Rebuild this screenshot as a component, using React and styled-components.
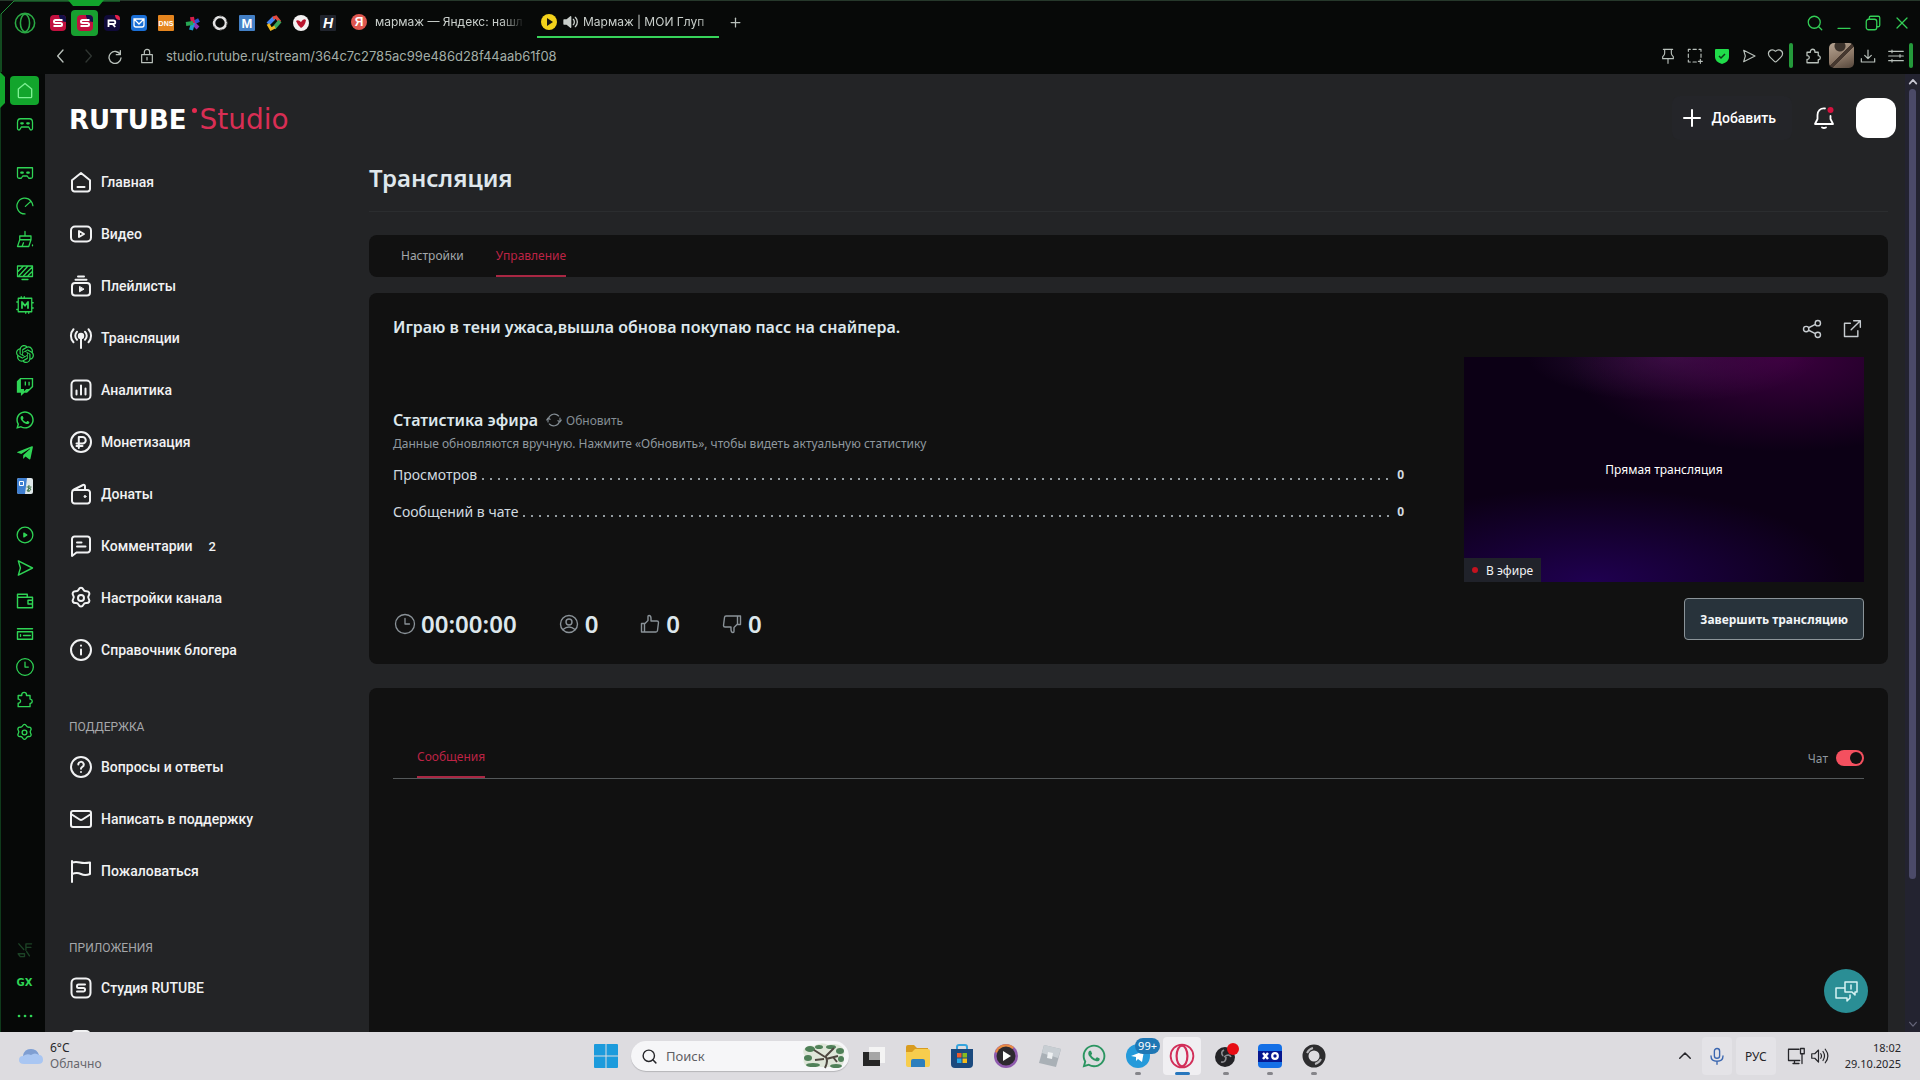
import React from 'react';
import styled, { createGlobalStyle } from 'styled-components';
import {
  Clock3,
  Heart,
  Mail,
  Plus,
  Search,
  X,
} from 'lucide-react';
import { SiOpenai } from 'react-icons/si';
import { FaTelegramPlane, FaTwitch, FaWhatsapp } from 'react-icons/fa';

const GlobalStyle = createGlobalStyle`
  * {
    box-sizing: border-box;
  }

  body {
    margin: 0;
    background: #070908;
    font-family: Roboto, "Liberation Sans", sans-serif;
    overflow: hidden;
  }

  button,
  input {
    font: inherit;
    color: inherit;
    border: 0;
    padding: 0;
    margin: 0;
    background: none;
  }

  a {
    color: inherit;
    text-decoration: none;
  }

  svg {
    display: block;
    flex: none;
  }
`;

/* ---------- window shell ---------- */

const Window = styled.div`
  position: relative;
  display: grid;
  grid-template-rows: 74px minmax(0, 1fr) 48px;
  height: 100vh;
`;

const FrameGlow = styled.svg`
  position: absolute;
  top: 0;
  left: 0;
  pointer-events: none;
`;

const Chrome = styled.header`
  display: grid;
  grid-template-rows: 43px 23px;
  background: #070908;
  border-top: 1px solid #26382b;
`;

const ChromeRow = styled.div`
  display: flex;
  align-items: center;
  justify-content: space-between;
`;

const TabStrip = styled.div`
  display: flex;
  align-items: center;
  padding-left: 9px;
`;

const PinnedTabs = styled.div`
  display: flex;
  margin-left: 4px;
`;

const ChromeButton = styled.button`
  display: flex;
  align-items: center;
  justify-content: center;
  width: ${props => props.$width || 27}px;
  height: 26px;
  border-radius: 4px;
  color: ${props => props.$color || '#b9c1bb'};
  background: ${props => props.$fill || 'none'};
`;

const TextTab = styled.button`
  display: flex;
  align-items: center;
  gap: ${props => (props.$active ? 5 : 8)}px;
  width: ${props => (props.$active ? 182 : 180)}px;
  height: 30px;
  margin-left: ${props => (props.$active ? 12 : 4)}px;
  padding-left: ${props => (props.$active ? 4 : 6)}px;
  border-bottom: 2px solid ${props => (props.$active ? '#37d45a' : 'transparent')};
  font-family: Inter, sans-serif;
  font-size: 12px;
  color: #c9cfcb;
`;

const TabTitle = styled.span`
  flex: 1;
  white-space: nowrap;
  text-align: left;
  mask-image: linear-gradient(90deg, #000 84%, transparent 100%);
`;

const AddressRow = styled.div`
  display: flex;
  flex: 1;
  align-items: center;
  padding-left: 47px;
`;

const AddressInput = styled.input`
  flex: 1;
  font-family: Inter, sans-serif;
  font-size: 13px;
  color: #a3aea7;
  outline: none;
`;

const ChromeActions = styled.div`
  display: flex;
  align-items: center;
  padding-right: ${props => props.$end || 0}px;
`;

const GreenBar = styled.span`
  width: 4px;
  height: 25px;
  margin-right: 4px;
  border-radius: 2px;
  background: #249a3b;
`;

const ProfileThumb = styled.span`
  width: 25px;
  height: 25px;
  border-radius: 5px;
  background:
    radial-gradient(circle at 44% 12%, #3b322b 0 5px, transparent 6px),
    linear-gradient(135deg, transparent 46%, #46382f 48% 56%, transparent 58%),
    linear-gradient(160deg, #b7a593, #8b7766 55%, #54463b);
`;

const Middle = styled.div`
  display: grid;
  grid-template-columns: 45px minmax(0, 1fr) 15px;
  min-height: 0;
`;

/* ---------- GX side panel ---------- */

const SidePanel = styled.nav`
  display: flex;
  flex-direction: column;
  padding: 0 0 0 8px;
  background: #060807;
  border-left: 1px solid #0f3a1b;
`;

const SideGroup = styled.div`
  display: flex;
  flex-direction: column;
  margin-bottom: 16px;

  &:last-child {
    margin: auto 0 0;
  }
`;

const SideButton = styled.button`
  display: flex;
  align-items: center;
  justify-content: center;
  width: 31px;
  height: 33px;
  color: ${props => (props.$dim ? '#1c4326' : '#2fd455')};
`;

const SideHome = styled.span`
  display: flex;
  align-items: center;
  justify-content: center;
  width: 29px;
  height: 29px;
  border-radius: 4px;
  background: #12a52c;
  color: #7df093;
`;

const GxLabel = styled.span`
  font-family: "DejaVu Sans", sans-serif;
  font-size: 10px;
  font-weight: 700;
`;

/* ---------- studio page ---------- */

const Page = styled.div`
  position: relative;
  display: grid;
  grid-template-columns: 324px minmax(0, 1fr);
  min-height: 0;
  overflow: hidden;
  background: #232426;
`;

const Menu = styled.aside`
  display: flex;
  flex-direction: column;
  padding: 30px 24px 0;
`;

const Logo = styled.a`
  display: flex;
  align-items: center;
  height: 32px;
  margin-bottom: 26px;
  font-family: "DejaVu Sans", sans-serif;
`;

const LogoName = styled.span`
  font-size: 26px;
  font-weight: 700;
  color: #fff;
`;

const LogoDot = styled.span`
  align-self: flex-start;
  width: 5px;
  height: 5px;
  margin: 4px 3px 0 5px;
  border-radius: 50%;
  background: #e62a4f;
`;

const LogoSuffix = styled.span`
  font-size: 28px;
  line-height: 30px;
  color: #d92e54;
`;

const MenuList = styled.ul`
  display: flex;
  flex-direction: column;
  gap: 12px;
  margin: 0 0 ${props => (props.$gap ? 45 : 0)}px;
  padding: 0;
  list-style: none;
`;

const MenuLink = styled.a`
  display: flex;
  align-items: center;
  gap: 8px;
  height: 40px;
  font-size: 14px;
  font-weight: 500;
  color: #f1f2f3;
`;

const Counter = styled.span`
  margin-left: 8px;
  font-size: 13px;
`;

const MenuHeading = styled.h2`
  margin: 0 0 8px;
  font-size: 12px;
  font-weight: 400;
  line-height: 24px;
  color: #a5a7aa;
`;

const Main = styled.main`
  display: flex;
  flex-direction: column;
  padding: 24px 17px 0 0;
`;

const TopActions = styled.div`
  display: flex;
  align-items: center;
  justify-content: flex-end;
  height: 40px;
  margin-right: -8px;
`;

const AddButton = styled.button`
  display: flex;
  align-items: center;
  gap: 8px;
  height: 44px;
  padding: 0 16px 0 8px;
  border-radius: 8px;
  background: #242529;
  font-size: 14px;
  font-weight: 500;
  color: #fff;
`;

const BellButton = styled.button`
  display: flex;
  align-items: center;
  justify-content: center;
  width: 64px;
  height: 40px;
  color: #fff;
`;

const Avatar = styled.button`
  width: 40px;
  height: 40px;
  border-radius: 12px;
  background: #fff;
`;

const PageTitle = styled.h1`
  margin: 23px 0 16px;
  padding-bottom: 16px;
  border-bottom: 1px solid #2b2d2f;
  font-family: "Noto Sans", sans-serif;
  font-size: 24px;
  font-weight: 600;
  line-height: 34px;
  color: #dfe7ec;
`;

const Panel = styled.section`
  display: flex;
  flex-direction: column;
  border-radius: 8px;
  background: #111;
  font-family: "Noto Sans", sans-serif;
`;

const TabsPanel = styled(Panel)`
  flex-direction: row;
  gap: 32px;
  height: 42px;
  margin: 7px 0 16px;
  padding: 0 32px;
`;

const SectionTab = styled.button`
  height: 42px;
  border-bottom: 2px solid ${props => (props.$active ? '#a92743' : 'transparent')};
  font-size: 12px;
  color: ${props => (props.$active ? '#bd2345' : '#a3a8ab')};
`;

const StreamPanel = styled(Panel)`
  display: grid;
  grid-template-columns: minmax(0, 1fr) 400px;
  column-gap: 60px;
  height: 371px;
  margin-bottom: 24px;
  padding: 20px 24px 24px;
`;

const StreamTitle = styled.h2`
  margin: 0;
  font-size: 16px;
  font-weight: 600;
  line-height: 28px;
  color: #dde7ec;
`;

const StreamTools = styled.div`
  display: flex;
  align-items: center;
  justify-content: flex-end;
  gap: 16px;
  height: 32px;
`;

const ToolButton = styled.button`
  display: flex;
  align-items: center;
  justify-content: center;
  width: 24px;
  height: 24px;
  color: #c7ccd0;
`;

const StreamLeft = styled.div`
  display: flex;
  flex-direction: column;
`;

const StreamRight = styled.div`
  display: flex;
  flex-direction: column;
  align-items: flex-end;
`;

const StatsHead = styled.div`
  display: flex;
  align-items: center;
  gap: 8px;
  height: 24px;
  margin-top: 67px;
`;

const StatsTitle = styled.h3`
  margin: 0;
  font-size: 16px;
  font-weight: 600;
  color: #dde7ec;
`;

const RefreshButton = styled.button`
  display: flex;
  align-items: center;
  gap: 4px;
  font-size: 12px;
  color: #848d94;
`;

const StatsNote = styled.p`
  margin: 2px 0 8px;
  font-size: 12px;
  line-height: 20px;
  color: #8f989f;
`;

const StatsList = styled.dl`
  display: flex;
  flex-direction: column;
  gap: 13px;
  margin: 0;
`;

const StatsRow = styled.div`
  display: flex;
  align-items: center;
  height: 24px;

  dt {
    font-size: 14px;
    color: #d2dbe0;
  }

  dd {
    margin: 0;
    font-size: 12px;
    font-weight: 700;
    color: #d2dbe0;
  }
`;

const Leader = styled.span`
  flex: 1;
  height: 2px;
  margin: 10px 4px 0 2px;
  background: radial-gradient(circle, #949ca1 1px, transparent 1px) 0 0 / 8px 2px repeat-x;
`;

const Metrics = styled.div`
  display: flex;
  align-items: center;
  gap: 40px;
  height: 32px;
  margin: auto 0 0;
`;

const Metric = styled.div`
  display: flex;
  align-items: center;
  gap: 4px;
  font-size: 24px;
  font-weight: 600;
  line-height: 32px;
  color: #dde7ec;

  svg {
    color: #8a9298;
  }
`;

const Preview = styled.div`
  display: grid;
  width: 100%;
  height: 225px;
  margin: 12px 0 16px;
  background:
    radial-gradient(ellipse 54% 42% at 80% 0%, rgba(84, 0, 84, 0.65), transparent),
    radial-gradient(ellipse 36% 20% at 52% 0%, rgba(70, 28, 84, 0.6), transparent),
    radial-gradient(ellipse 64% 42% at 32% 100%, rgba(38, 0, 100, 0.75), transparent),
    #0c0015;
`;

const PreviewText = styled.span`
  grid-area: 1 / 1;
  place-self: center;
  font-size: 12px;
  color: #fff;
`;

const LiveBadge = styled.span`
  grid-area: 1 / 1;
  place-self: end start;
  display: flex;
  align-items: center;
  gap: 8px;
  height: 24px;
  padding: 0 8px;
  background: #20222a;
  font-size: 12px;
  color: #f2f2f4;

  &::before {
    content: '';
    width: 6px;
    height: 6px;
    border-radius: 50%;
    background: #c4121f;
  }
`;

const FinishButton = styled.button`
  height: 42px;
  padding: 0 15px;
  border: 1px solid #8b9499;
  border-radius: 4px;
  background: #28333b;
  font-size: 12px;
  font-weight: 700;
  color: #f1f5f7;
`;

const ChatPanel = styled(Panel)`
  flex: 1;
  padding: 49px 24px 0;
  border-radius: 8px 8px 0 0;
`;

const ChatHead = styled.div`
  display: flex;
  align-items: flex-end;
  justify-content: space-between;
  padding-left: 24px;
  border-bottom: 1px solid #54585a;
`;

const ChatTab = styled(SectionTab)`
  height: 41px;
`;

const ToggleLabel = styled.label`
  display: flex;
  align-items: center;
  gap: 8px;
  height: 40px;
  font-size: 12px;
  color: #8f989f;
`;

const Toggle = styled.input`
  appearance: none;
  display: flex;
  justify-content: flex-end;
  width: 28px;
  height: 16px;
  padding: 2px;
  border-radius: 8px;
  background: #f4505f;

  &::before {
    content: '';
    width: 12px;
    height: 12px;
    border-radius: 50%;
    background: #111;
  }
`;

const HelpButton = styled.button`
  position: absolute;
  right: 37px;
  bottom: 19px;
  display: flex;
  align-items: center;
  justify-content: center;
  width: 44px;
  height: 44px;
  border-radius: 50%;
  background: #2a8e95;
  color: #d6f3f4;
`;

const ScrollTrack = styled.div`
  display: flex;
  flex-direction: column;
  align-items: center;
  padding: 3px 0;
  background: #232330;
  color: #c6c6d2;
`;

const ScrollThumb = styled.div`
  width: 7px;
  height: 83%;
  margin: 2px 0 auto;
  border-radius: 4px;
  background: #4b4a68;
`;

/* ---------- taskbar ---------- */

const Taskbar = styled.footer`
  display: grid;
  grid-template-columns: 1fr auto 1fr;
  align-items: center;
  background: #dddce0;
  font-family: "Noto Sans", sans-serif;
  font-size: 12px;
  color: #26262a;
`;

const Weather = styled.button`
  display: flex;
  align-items: center;
  gap: 6px;
  justify-self: start;
  padding-left: 18px;
  line-height: 16px;
  text-align: left;
`;

const Muted = styled.span`
  display: block;
  color: #66666c;
`;

const Apps = styled.div`
  display: flex;
  align-items: center;
`;

const AppButton = styled.button`
  position: relative;
  display: flex;
  align-items: center;
  justify-content: center;
  width: 38px;
  height: 38px;
  margin: 0 3px;
  border-radius: 4px;
  background: ${props => (props.$active ? '#f0eff2' : 'none')};

  &::after {
    content: '';
    position: absolute;
    bottom: 0;
    width: ${props => (props.$active ? 15 : 6)}px;
    height: 3px;
    border-radius: 2px;
    background: ${props => (props.$active ? '#2676bd' : '#85858a')};
    display: ${props => (props.$active || props.$running ? 'block' : 'none')};
  }
`;

const AppBadge = styled.span`
  position: absolute;
  top: 1px;
  right: -3px;
  padding: 0 3px;
  border-radius: 8px;
  background: #1f77b4;
  font-size: 11px;
  line-height: 16px;
  color: #fff;
`;

const SearchBox = styled.label`
  display: flex;
  align-items: center;
  gap: 8px;
  width: 218px;
  height: 30px;
  margin: 0 3px;
  padding: 0 3px 0 10px;
  border-radius: 15px;
  background: #f6f6f8;
  box-shadow: 0 1px 1px #b5b5b9;

  input {
    flex: 1;
    min-width: 0;
    font-size: 13px;
    outline: none;
  }

  input::placeholder {
    color: #5f5f64;
    opacity: 1;
  }
`;

const Tray = styled.div`
  display: flex;
  align-items: center;
  justify-self: end;
  padding-right: 19px;
`;

const TrayButton = styled.button`
  display: flex;
  align-items: center;
  justify-content: center;
  width: ${props => props.$width}px;
  height: 38px;
  margin-right: ${props => props.$after || 0}px;
  border-radius: 4px;
  background: ${props => (props.$raised ? '#e4e3e7' : 'none')};
`;

const DateTime = styled.time`
  margin-left: 13px;
  font-size: 11px;
  line-height: 16px;
  text-align: right;
`;

/* ---------- icons ---------- */

const Icon = ({ size = 24, box = 24, weight = 2, children, ...rest }) => (
  <svg
    width={size}
    height={size}
    viewBox={`0 0 ${box} ${box}`}
    fill="none"
    stroke="currentColor"
    strokeWidth={weight}
    strokeLinecap="round"
    strokeLinejoin="round"
    aria-hidden="true"
    {...rest}
  >
    {children}
  </svg>
);

const menuIcons = {
  home: <path d="M3 10.2 12 3l9 7.200V19a2.500 2.500 0 0 1-2.500 2.500h-13A2.500 2.500 0 0 1 3 19ZM8.500 17h7" />,
  video: (
    <>
      <rect x="2" y="4.500" width="20" height="15" rx="4" />
      <path d="M10 9v6l5-3Z" />
    </>
  ),
  playlists: (
    <>
      <rect x="3" y="9" width="18" height="12.500" rx="3" />
      <path d="M6.500 5.800h11M9 2.500h6" />
      <path d="M10.500 12.800v5l4.200-2.500Z" fill="currentColor" strokeWidth="1" />
    </>
  ),
  streams: (
    <>
      <circle cx="12" cy="10" r="2.200" fill="currentColor" />
      <path d="M12 11v11M8 13.800a5.500 5.500 0 0 1 0-8M16 5.800a5.500 5.500 0 0 1 0 8M4.500 16.200a9.500 9.500 0 0 1 0-13M19.500 3.200a9.500 9.500 0 0 1 0 13" />
    </>
  ),
  analytics: (
    <>
      <rect x="2.500" y="2.500" width="19" height="19" rx="4" />
      <path d="M7.500 12.500v4M12 7.500v9M16.500 10.500v6" />
    </>
  ),
  money: (
    <>
      <circle cx="12" cy="12" r="10" />
      <path d="M9.800 18V7h3.700a3.200 3.200 0 0 1 0 6.500H7.500M7.500 16h6" />
    </>
  ),
  donate: (
    <>
      <path d="M5 8h13.500A2.500 2.500 0 0 1 21 10.500V19a2.500 2.500 0 0 1-2.500 2.500h-13A2.500 2.500 0 0 1 3 19v-8.500C3 9 4 8 5 7.500L14 3c1.200-.5 2 .3 2 1.500V8" />
      <circle cx="16" cy="14.500" r="1" fill="currentColor" strokeWidth="1" />
    </>
  ),
  comments: (
    <path d="M3 22V5a2.500 2.500 0 0 1 2.500-2.500h13A2.500 2.500 0 0 1 21 5v11a2.500 2.500 0 0 1-2.500 2.500H7.500ZM8 8.500h4.500M8 12.500h8.500" />
  ),
  settings: (
    <>
      <circle cx="12" cy="12" r="3" />
      <path d="M12 1.800c1.200 0 1.800.6 2.300 1.700.6 1.300 1.700 1.900 3.100 1.800 1.200-.1 2 .1 2.700 1.200.6 1.100.4 1.900-.3 2.900-.9 1.200-.9 2.400 0 3.600.7 1 .9 1.800.3 2.900-.7 1.100-1.500 1.300-2.700 1.200-1.400-.1-2.500.5-3.100 1.800-.5 1.100-1.100 1.700-2.300 1.700s-1.800-.6-2.300-1.700c-.6-1.300-1.700-1.900-3.100-1.800-1.200.1-2-.1-2.700-1.200-.6-1.100-.4-1.900.3-2.900.9-1.200.9-2.400 0-3.600-.7-1-.9-1.800-.3-2.900.7-1.100 1.500-1.300 2.700-1.200 1.400.1 2.500-.5 3.100-1.800.5-1.100 1.100-1.700 2.300-1.700Z" />
    </>
  ),
  info: (
    <>
      <circle cx="12" cy="12" r="10" />
      <path d="M12 11.500v5M12 7.500v.200" />
    </>
  ),
  question: (
    <>
      <circle cx="12" cy="12" r="10" />
      <path d="M9.300 9.500a2.700 2.700 0 1 1 4 2.400c-.9.500-1.300.9-1.300 1.800M12 17v.100" />
    </>
  ),
  studio: (
    <>
      <rect x="2.500" y="2.500" width="19" height="19" rx="4.500" />
      <path d="M16 8.500H9.500A1.500 1.500 0 0 0 8 10v.5A1.500 1.500 0 0 0 9.500 12h5a1.500 1.500 0 0 1 1.500 1.500v.5a1.500 1.500 0 0 1-1.500 1.500H8" />
    </>
  ),
  account: <rect x="3" y="3" width="18" height="18" rx="4" fill="currentColor" />,
};

const Puzzle = ({ size }) => (
  <Icon size={size} weight={1.7}>
    <path d="M4 7h4.500V6a3 3 0 0 1 6 0v1H19v4.500h.500a2.800 2.800 0 0 1 0 5.500H19v4H4v-4.500c4 .5 4-5.500 0-5Z" />
  </Icon>
);

const SendIcon = ({ size }) => (
  <Icon size={size} weight={1.700}>
    <path d="M4 3.500 21 12 4 20.500 6.500 12Z" />
  </Icon>
);

const RingMark = ({ size, color, inner }) => (
  <svg width={size} height={size} viewBox="0 0 24 24" fill="none" stroke={color} aria-hidden="true">
    <circle cx="12" cy="12" r="10.500" strokeWidth="1.700" />
    <ellipse cx="12" cy="12" rx="5" ry="9.500" strokeWidth={inner || 1.700} />
  </svg>
);

const SpeakerIcon = () => (
  <Icon size={16} weight={2}>
    <path d="M3 9v6h4l6 5V4L7 9Z" fill="currentColor" />
    <path d="M17 8c2 2 2 6 0 8M20 5c4 4 4 10 0 14" />
  </Icon>
);

const RutubeFavicon = () => (
  <svg width="16" height="16" viewBox="0 0 16 16" aria-hidden="true">
    <rect width="16" height="16" rx="4" fill="#c2103f" />
    <path d="M9 0h3a4 4 0 0 1 4 4v3C12 7 9 4 9 0Z" fill="#14104a" />
    <path d="M12.500 5H5.500Q4 5 4 6.500T5.500 8h5Q12 8 12 9.500T10.500 11H3.500" fill="none" stroke="#fff" strokeWidth="2" />
  </svg>
);

const LetterFavicon = ({ letter, bg, color = '#fff', size = 12, round = 3, italic }) => (
  <svg width="16" height="16" viewBox="0 0 16 16" aria-hidden="true">
    <rect width="16" height="16" rx={round} fill={bg} />
    <text
      x="8"
      y={8 + size * 0.36}
      fontFamily="Liberation Sans"
      fontSize={size}
      fontWeight="700"
      fontStyle={italic ? 'italic' : 'normal'}
      textAnchor="middle"
      fill={color}
    >
      {letter}
    </text>
  </svg>
);

const pinnedTabs = [
  { name: 'Rutube', icon: <RutubeFavicon /> },
  { name: 'Студия RUTUBE', icon: <RutubeFavicon />, active: true },
  {
    name: 'Rutube видео',
    icon: (
      <svg width="16" height="16" viewBox="0 0 16 16" aria-hidden="true">
        <rect width="16" height="16" rx="4" fill="#100a3a" />
        <path d="M11 0h1a4 4 0 0 1 4 4v1c-3 0-5-2-5-5Z" fill="#e8214b" />
        <path d="M4.500 12V5.500h5q1.800 0 1.800 1.700T9.500 9H5M8.500 9l2.700 3" fill="none" stroke="#fff" strokeWidth="1.800" />
      </svg>
    ),
  },
  {
    name: 'Почта',
    icon: (
      <svg width="16" height="16" viewBox="0 0 16 16" fill="none" stroke="#fff" strokeWidth="1.300" aria-hidden="true">
        <rect width="16" height="16" rx="3" fill="#1a6fd6" stroke="none" />
        <path d="M3 4h10v6q0 2-2 2H5q-2 0-2-2ZM3 4l5 5 5-5" />
      </svg>
    ),
  },
  { name: 'DNS', icon: <LetterFavicon letter="DNS" bg="#e5851e" size={7} round={1} /> },
  {
    name: 'Сервисы',
    icon: (
      <svg width="16" height="16" viewBox="0 0 16 16" strokeWidth="4" aria-hidden="true">
        <path d="m8 8 6-3" stroke="#274fd0" />
        <path d="m8 8 5 5" stroke="#8b35b8" />
        <path d="M8 8 7 2" stroke="#d51d49" />
        <path d="m8 8-2 7" stroke="#1d9fcf" />
        <path d="M8 8 1 9" stroke="#27a653" />
      </svg>
    ),
  },
  {
    name: 'Ring',
    icon: (
      <svg width="16" height="16" viewBox="0 0 16 16" fill="none" aria-hidden="true">
        <circle cx="8" cy="8" r="6" stroke="#e4e4e4" strokeWidth="2.600" />
        <circle cx="8" cy="8" r="7" stroke="#555" strokeDasharray="3 5" />
      </svg>
    ),
  },
  { name: 'M', icon: <LetterFavicon letter="M" bg="#4380c6" size={13} round={1} /> },
  {
    name: 'Карты',
    icon: (
      <svg width="16" height="16" viewBox="0 0 16 16" fill="none" strokeWidth="4" aria-hidden="true">
        <path d="m2 9 6-6" stroke="#4385f4" />
        <path d="m7 3 3-1 4 5" stroke="#e04a3f" strokeWidth="3" />
        <path d="m14 6-6 7" stroke="#3ba55a" />
        <path d="m9 12-4 2-3-5" stroke="#efb820" strokeWidth="3" />
      </svg>
    ),
  },
  {
    name: 'V',
    icon: (
      <svg width="16" height="16" viewBox="0 0 16 16" aria-hidden="true">
        <circle cx="8" cy="8" r="8" fill="#f3f1f1" />
        <path d="M3 6q2-2 5 1 2.500-4 5-2-1 6-5 8Q5 11 3 6Z" fill="#b8142d" />
      </svg>
    ),
  },
  { name: 'H', icon: <LetterFavicon letter="H" bg="#20242d" size={14} round={1} italic /> },
];

const sideGroups = [
  [
    {
      name: 'Домой',
      home: true,
      icon: <Icon size={20} weight={1.600}><path d="M4 9.500 12 3l8 6.500V19q0 1-1 1H5q-1 0-1-1Z" /></Icon>,
    },
    {
      name: 'GX Corner',
      icon: (
        <Icon size={18} weight={1.700}>
          <path d="M6 5h12q4 0 4 5v8q0 2-2 2-1 0-2-2l-1-2H7l-1 2q-1 2-2 2-2 0-2-2v-8q0-5 4-5Z" />
          <path d="M7 11h2M15 11h2" strokeWidth="3" />
        </Icon>
      ),
    },
  ],
  [
    {
      name: 'GX Games',
      icon: (
        <Icon size={18} weight={1.700}>
          <path d="M2 5h20v12q0 2-2 2h-3l-2-3H9l-2 3H4q-2 0-2-2Z" />
          <path d="M7 11.500h2M15 11.500h2" strokeWidth="3" />
        </Icon>
      ),
    },
    {
      name: 'GX Control',
      icon: <Icon size={18} weight={1.700}><path d="M12 22.500A10.500 10.500 0 1 1 20 5.500M20 5.500 12.500 12.500M20 5.500q2 2.500 2.500 6" /></Icon>,
    },
    {
      name: 'GX Cleaner',
      icon: (
        <Icon size={18} weight={1.700}>
          <path d="M12 2v6M5 8h15v5H5ZM5 13l-3 9h15l3-9M8 22l2-5M22 20v1" />
        </Icon>
      ),
    },
    {
      name: 'Обои',
      icon: (
        <Icon size={18} weight={1.700}>
          <path d="M2 4h20v14H2ZM8 22h8M3 11l7-7M4 17 16 4M10 17 22 5M16 17l6-6" />
        </Icon>
      ),
    },
    {
      name: 'Моды',
      icon: (
        <Icon size={18} weight={1.700}>
          <path d="M3 3h18v18H3ZM7 3V1M11 3V1M13 23v-2M17 23v-2M1 8h2M21 9h2M1 18h2M21 16h2" />
          <path d="M8 16V8l4 5 4-5v8" strokeWidth="2.400" />
        </Icon>
      ),
    },
  ],
  [
    { name: 'ChatGPT', icon: <SiOpenai size={18} /> },
    { name: 'Twitch', icon: <FaTwitch size={18} /> },
    { name: 'WhatsApp', icon: <FaWhatsapp size={20} /> },
    { name: 'Telegram', icon: <FaTelegramPlane size={18} /> },
    {
      name: 'Переводчик',
      icon: (
        <svg width="16" height="16" viewBox="0 0 16 16" aria-hidden="true">
          <rect width="16" height="16" rx="2" fill="#dfe7ea" />
          <path d="M0 2q0-2 2-2h8L8 16H2q-2 0-2-2Z" fill="#3f7fd0" />
          <path d="M2.500 3.500h4v4h-4Z" fill="none" stroke="#fff" />
          <path d="M9.500 9h5M12 7q-1 4 0 7M14 10q-3 0-4 3 3 1 4-2" fill="none" stroke="#40754c" />
        </svg>
      ),
    },
  ],
  [
    {
      name: 'Плеер',
      icon: <Icon size={18} weight={1.700}><circle cx="12" cy="12" r="10.500" /><path d="M10.500 9.500v5l4-2.500Z" fill="currentColor" /></Icon>,
    },
    { name: 'Мой поток', icon: <SendIcon size={20} /> },
    {
      name: 'Кошелёк',
      icon: <Icon size={18} weight={1.900}><path d="M2 7h20v14H2ZM2 7V3h13v4M22 11h-6v5h6" /></Icon>,
    },
    {
      name: 'Лента',
      icon: <Icon size={18} weight={1.900}><path d="M2 5h20M2 9h20v10H2ZM6 13v2M10 14h9" /></Icon>,
    },
    { name: 'История', icon: <Clock3 size={20} strokeWidth={1.500} /> },
    { name: 'Расширения', icon: <Puzzle size={19} /> },
    { name: 'Настройки', icon: <Icon size={19} weight={1.700}>{menuIcons.settings}</Icon> },
  ],
  [
    {
      name: 'Снимок',
      dim: true,
      icon: <Icon size={17} weight={1.900}><path d="M4 4l7 8M22 4h-8v9M14 9h7M3 18h9v4H6l-3-4ZM15 15l4 6" /></Icon>,
    },
    { name: 'GX', icon: <GxLabel>GX</GxLabel> },
    {
      name: 'Ещё',
      icon: <Icon size={16} weight={4}><path d="M3 12h.100M12 12h.100M21 12h.100" /></Icon>,
    },
  ],
];

const menuItems = [
  { label: 'Главная', icon: 'home' },
  { label: 'Видео', icon: 'video' },
  { label: 'Плейлисты', icon: 'playlists' },
  { label: 'Трансляции', icon: 'streams' },
  { label: 'Аналитика', icon: 'analytics' },
  { label: 'Монетизация', icon: 'money' },
  { label: 'Донаты', icon: 'donate' },
  { label: 'Комментарии', icon: 'comments', count: 2 },
  { label: 'Настройки канала', icon: 'settings' },
  { label: 'Справочник блогера', icon: 'info' },
];

const stats = [
  { label: 'Просмотров', value: 0 },
  { label: 'Сообщений в чате', value: 0 },
];

const metrics = [
  {
    name: 'Длительность',
    value: '00:00:00',
    icon: <Icon weight={1.300}><circle cx="12" cy="12" r="9.500" /><path d="M12 6.500V12h4.500" /></Icon>,
  },
  {
    name: 'Зрители',
    value: '0',
    icon: (
      <Icon weight={1.400}>
        <circle cx="12" cy="12" r="8.500" />
        <circle cx="12" cy="10" r="3" />
        <path d="M6 17.500q6-5 12 0" />
      </Icon>
    ),
  },
  {
    name: 'Нравится',
    value: '0',
    icon: (
      <Icon weight={1.400}>
        <path d="M3.500 11.500h3v8.500h-3ZM6.500 12l3.500-3.500V4.500q0-1 1-1 2 0 2 3V9h6q1.500 0 1.500 1.500l-1 8Q19.300 20 18 20H6.500" />
      </Icon>
    ),
  },
  {
    name: 'Не нравится',
    value: '0',
    icon: (
      <Icon weight={1.400}>
        <path d="M20.500 12.500h-3V4h3ZM17.500 12 14 15.500v4q0 1-1 1-2 0-2-3V15H5q-1.500 0-1.500-1.500l1-8Q4.700 4 6 4h11.500" />
      </Icon>
    ),
  },
];

const apps = [
  {
    name: 'Представление задач',
    icon: (
      <svg width="24" height="24" viewBox="0 0 24 24" aria-hidden="true">
        <path d="M7 3h16v16H7Z" fill="#f4f4f4" />
        <path d="M1 8h17v14H1Z" fill="#262626" />
        <path d="M7 8h11v8H7Z" fill="#a6a6a6" />
      </svg>
    ),
  },
  {
    name: 'Проводник',
    icon: (
      <svg width="26" height="24" viewBox="0 0 26 24" aria-hidden="true">
        <path d="M1 3q0-2 2-2h6l3 3h11v6H1Z" fill="#d99c1f" />
        <path d="M1 8h6l3-3h13q2 0 2 2v14q0 2-2 2H3q-2 0-2-2Z" fill="#f7cd4d" />
        <path d="M6 23v-6q0-2 2-2h10q2 0 2 2v6Z" fill="#2d7fbd" />
      </svg>
    ),
  },
  {
    name: 'Microsoft Store',
    icon: (
      <svg width="24" height="26" viewBox="0 0 24 26" aria-hidden="true">
        <path d="M7 8V4q0-2 2-2h6q2 0 2 2v4" fill="none" stroke="#36a4dd" strokeWidth="2" />
        <path d="M1 6h22v15q0 4-4 4H5q-4 0-4-4Z" fill="#1b4a7e" />
        <path d="M7 10h4.500v4.500H7Z" fill="#ef5b2b" />
        <path d="M12.500 10H17v4.500h-4.500Z" fill="#84bc21" />
        <path d="M7 15.500h4.500V20H7Z" fill="#28a7e4" />
        <path d="M12.500 15.500H17V20h-4.500Z" fill="#f6bc1c" />
      </svg>
    ),
  },
  {
    name: 'Медиаплеер',
    icon: (
      <svg width="24" height="24" viewBox="0 0 24 24" aria-hidden="true">
        <circle cx="12" cy="12" r="12" fill="#8f5bae" />
        <path d="M1 8A12 12 0 0 1 20 3L12 12Z" fill="#e98b45" />
        <circle cx="12" cy="12" r="9.500" fill="#2d2a2f" />
        <path d="M9 7v10l8-5Z" fill="#fff" />
      </svg>
    ),
  },
  {
    name: 'Roblox',
    icon: (
      <svg width="24" height="24" viewBox="0 0 24 24" aria-hidden="true">
        <path d="M6 1 23 5l-5 18L1 19Z" fill="#a9b0b6" />
        <path d="M6 1 23 5l-3 9L4 9Z" fill="#c8ced3" />
        <path d="m10 8 5 1-1 6-5-1Z" fill="#edf0f2" />
      </svg>
    ),
  },
  { name: 'WhatsApp', icon: <FaWhatsapp size={26} color="#2b9561" /> },
  {
    name: 'Telegram',
    running: true,
    badge: '99+',
    icon: (
      <svg width="24" height="24" viewBox="0 0 24 24" aria-hidden="true">
        <circle cx="12" cy="12" r="12" fill="#259ada" />
        <path d="m5 12 13-5-2 11-4-3-2 2v-4Z" fill="#fff" />
      </svg>
    ),
  },
  { name: 'Opera GX', active: true, icon: <RingMark size={26} color="#d22e59" inner={2} /> },
  {
    name: 'OBS Studio',
    running: true,
    icon: (
      <svg width="26" height="26" viewBox="0 0 26 26" aria-hidden="true">
        <circle cx="12" cy="14" r="10" fill="#232326" />
        <path d="M11 7q-4 2-1 6M18 14q-2-4-7 0M8 19q5 1 5-5" fill="none" stroke="#8d8d92" strokeWidth="1.600" />
        <circle cx="20" cy="6" r="6" fill="#e80d14" />
      </svg>
    ),
  },
  {
    name: 'XO',
    running: true,
    icon: (
      <svg width="24" height="24" viewBox="0 0 24 24" aria-hidden="true">
        <rect width="24" height="24" rx="4" fill="#1470e6" />
        <path d="M0 7h24v11H0Z" fill="#06178f" />
        <path d="m5 9 5 6M10 9l-5 6" stroke="#fff" strokeWidth="2.500" />
        <circle cx="17" cy="12" r="2.800" fill="none" stroke="#fff" strokeWidth="2.200" />
      </svg>
    ),
  },
  {
    name: 'Steelseries',
    running: true,
    icon: (
      <svg width="24" height="24" viewBox="0 0 24 24" fill="none" aria-hidden="true">
        <circle cx="12" cy="12" r="8.500" stroke="#2d2d2f" strokeWidth="6" />
        <path d="M5 9q2-4 6-5M19 15q-2 4-6 5" stroke="#b7b7ba" strokeWidth="2" />
      </svg>
    ),
  },
];

const MenuItem = ({ label, icon, count }) => (
  <li>
    <MenuLink href="#">
      {typeof icon === 'string' ? <Icon>{menuIcons[icon]}</Icon> : icon}
      {label}
      {count && <Counter>{count}</Counter>}
    </MenuLink>
  </li>
);

const BrowserChrome = () => (
  <Chrome>
    <ChromeRow>
      <TabStrip>
        <ChromeButton $width={31} aria-label="Меню Opera">
          <RingMark size={22} color="#2aa944" />
        </ChromeButton>
        <PinnedTabs>
          {pinnedTabs.map(tab => (
            <ChromeButton key={tab.name} aria-label={tab.name} $fill={tab.active ? '#18a030' : undefined}>
              {tab.icon}
            </ChromeButton>
          ))}
        </PinnedTabs>
        <TextTab>
          <LetterFavicon letter="Я" bg="#e0574f" round={8} />
          <TabTitle>мармаж — Яндекс: нашл</TabTitle>
        </TextTab>
        <TextTab $active>
          <svg width="16" height="16" viewBox="0 0 16 16" aria-hidden="true">
            <circle cx="8" cy="8" r="8" fill="#f3d21b" />
            <path d="M6 4v8l6-4Z" fill="#141414" />
          </svg>
          <SpeakerIcon />
          <TabTitle>Мармаж | МОИ Глуп</TabTitle>
        </TextTab>
        <ChromeButton $width={32} aria-label="Новая вкладка">
          <Plus size={15} strokeWidth={2} />
        </ChromeButton>
      </TabStrip>
      <ChromeActions $end={4}>
        <ChromeButton $width={29} $color="#33cf56" aria-label="Поиск вкладок"><Search size={18} strokeWidth={1.700} /></ChromeButton>
        <ChromeButton $width={29} $color="#33cf56" aria-label="Свернуть">
          <Icon size={16}><path d="M3 20h18" /></Icon>
        </ChromeButton>
        <ChromeButton $width={29} $color="#33cf56" aria-label="Развернуть">
          <Icon size={18} weight={1.700}>
            <rect x="3" y="7" width="14" height="14" rx="3" />
            <path d="M7 7V5q0-2 2-2h10q2 0 2 2v10q0 2-2 2h-2" />
          </Icon>
        </ChromeButton>
        <ChromeButton $width={29} $color="#33cf56" aria-label="Закрыть"><X size={20} strokeWidth={1.500} /></ChromeButton>
      </ChromeActions>
    </ChromeRow>
    <ChromeRow>
      <AddressRow>
        <ChromeButton aria-label="Назад"><Icon size={16}><path d="M15 3 7 12l8 9" /></Icon></ChromeButton>
        <ChromeButton $color="#303632" aria-label="Вперёд"><Icon size={16}><path d="m9 3 8 9-8 9" /></Icon></ChromeButton>
        <ChromeButton aria-label="Обновить"><Icon size={16}><path d="M20 4v6h-6M20 10a9 9 0 1 0 1 5" /></Icon></ChromeButton>
        <ChromeButton $width={38} aria-label="Сведения о сайте">
          <Icon size={16} weight={1.800}><path d="M4 10h16v12H4ZM8 10V6a4 4 0 0 1 8 0v4M12 14v4" /></Icon>
        </ChromeButton>
        <AddressInput
          aria-label="Адресная строка"
          defaultValue="studio.rutube.ru/stream/364c7c2785ac99e486d28f44aab61f08"
        />
      </AddressRow>
      <ChromeActions $end={3}>
        <ChromeButton aria-label="Закрепить">
          <Icon size={16} weight={1.700}><path d="M5 2h14M7 2v6q0 3-3 5v3h16v-3q-3-2-3-5V2M12 16v7" /></Icon>
        </ChromeButton>
        <ChromeButton aria-label="Снимок страницы">
          <Icon size={16} weight={1.700}><path d="M2 5V2h3M9 2h5M18 2h3v3M21 9v5M2 9v5M2 18v3h3M9 21h5M20 17v6M17 20h6" /></Icon>
        </ChromeButton>
        <ChromeButton $color="#20dd4a" aria-label="Блокировка рекламы">
          <svg width="16" height="16" viewBox="0 0 16 16" aria-hidden="true">
            <path d="M1 2q0-1 1-1h12q1 0 1 1v7q0 5-7 7-7-2-7-7Z" fill="currentColor" />
            <path d="m5 8 2 2 4-4" fill="none" stroke="#0b3b17" strokeWidth="1.500" />
          </svg>
        </ChromeButton>
        <ChromeButton aria-label="Мой поток"><SendIcon size={16} /></ChromeButton>
        <ChromeButton aria-label="В закладки"><Heart size={17} strokeWidth={1.700} /></ChromeButton>
        <GreenBar />
        <ChromeButton $width={32} aria-label="Расширения"><Puzzle size={18} /></ChromeButton>
        <ProfileThumb />
        <ChromeButton $width={28} aria-label="Загрузки">
          <Icon size={16} weight={1.800}><path d="M12 3v12M7 11l5 5 5-5M2 16v5h20v-5" /></Icon>
        </ChromeButton>
        <ChromeButton aria-label="Быстрые настройки">
          <Icon size={16} weight={1.700}><path d="M1 5h22M1 12h22M1 19h22M6 3v4M18 10v4M6 17v4" /></Icon>
        </ChromeButton>
        <GreenBar />
      </ChromeActions>
    </ChromeRow>
  </Chrome>
);

const StudioMenu = () => (
  <Menu>
    <Logo href="#" aria-label="RUTUBE Studio">
      <LogoName>RUTUBE</LogoName>
      <LogoDot />
      <LogoSuffix>Studio</LogoSuffix>
    </Logo>
    <MenuList $gap>
      {menuItems.map(item => <MenuItem key={item.label} {...item} />)}
    </MenuList>
    <MenuHeading>ПОДДЕРЖКА</MenuHeading>
    <MenuList $gap>
      <MenuItem label="Вопросы и ответы" icon="question" />
      <MenuItem label="Написать в поддержку" icon={<Mail size={24} />} />
      <MenuItem label="Пожаловаться" icon={<Icon><path d="M3 2v21M3 3.500q4-1 8 0t10 0v11.500q-5 2-9 0t-9 0" /></Icon>} />
    </MenuList>
    <MenuHeading>ПРИЛОЖЕНИЯ</MenuHeading>
    <MenuList>
      <MenuItem label="Студия RUTUBE" icon="studio" />
      <MenuItem label="" icon="account" />
    </MenuList>
  </Menu>
);

const StreamCard = () => (
  <StreamPanel>
    <StreamLeft>
      <StreamTitle>Играю в тени ужаса,вышла обнова покупаю пасс на снайпера.</StreamTitle>
      <StatsHead>
        <StatsTitle>Статистика эфира</StatsTitle>
        <RefreshButton>
          <Icon size={16} weight={1.700}>
            <path d="M4 9a9 9 0 0 1 15-3M20 15a9 9 0 0 1-15 3M21 9v5M18 13l3 2 2-3M3 15v-5M1 12l2-3 3 2" />
          </Icon>
          Обновить
        </RefreshButton>
      </StatsHead>
      <StatsNote>Данные обновляются вручную. Нажмите «Обновить», чтобы видеть актуальную статистику</StatsNote>
      <StatsList>
        {stats.map(row => (
          <StatsRow key={row.label}>
            <dt>{row.label}</dt>
            <Leader />
            <dd>{row.value}</dd>
          </StatsRow>
        ))}
      </StatsList>
      <Metrics>
        {metrics.map(metric => (
          <Metric key={metric.name} title={metric.name}>
            {metric.icon}
            {metric.value}
          </Metric>
        ))}
      </Metrics>
    </StreamLeft>
    <StreamRight>
      <StreamTools>
        <ToolButton aria-label="Поделиться">
          <Icon size={20} weight={1.700}>
            <circle cx="5" cy="12" r="3.200" />
            <circle cx="19" cy="5" r="3.200" />
            <circle cx="19" cy="19" r="3.200" />
            <path d="m8 10.500 8-4M8 13.500l8 4" />
          </Icon>
        </ToolButton>
        <ToolButton aria-label="Открыть в новом окне">
          <Icon size={20} weight={1.700}><path d="M10 5H3v16h16v-7M14 2h8v8M22 2 11 13" /></Icon>
        </ToolButton>
      </StreamTools>
      <Preview>
        <PreviewText>Прямая трансляция</PreviewText>
        <LiveBadge>В эфире</LiveBadge>
      </Preview>
      <FinishButton>Завершить трансляцию</FinishButton>
    </StreamRight>
  </StreamPanel>
);

const Desktop = () => (
  <Taskbar>
    <Weather>
      <svg width="26" height="18" viewBox="0 0 26 18" aria-hidden="true">
        <path d="M6 17q-5 0-5-4 0-4 4-4 1-7 8-7 6 0 8 6 4 0 4 5 0 4-5 4Z" fill="#a9c6f2" />
        <path d="M5 9q1-7 8-7 6 0 8 6-4-3-8 0-4-2-8 1Z" fill="#7f9ed1" />
      </svg>
      <span>
        6°C
        <Muted>Облачно</Muted>
      </span>
    </Weather>
    <Apps>
      <AppButton aria-label="Пуск">
        <svg width="24" height="24" viewBox="0 0 24 24" fill="#1c9bdc" aria-hidden="true">
          <path d="M0 1q0-1 1-1h10.500v11.500H0ZM12.500 0H23q1 0 1 1v10.500H12.500ZM0 12.500h11.500V24H1q-1 0-1-1ZM12.500 12.500H24V23q0 1-1 1H12.500Z" />
        </svg>
      </AppButton>
      <SearchBox>
        <Search size={17} strokeWidth={2} />
        <input type="search" placeholder="Поиск" aria-label="Поиск" />
        <svg width="44" height="26" viewBox="0 0 44 26" aria-hidden="true">
          <path d="M2 6q4-5 10-3 8-5 14-1 9-3 14 2 4 5 1 9 3 8-4 11H6Q-1 20 3 13Q0 9 2 6Z" fill="#dfe6d9" />
          <g fill="#4f8058">
            <ellipse cx="8" cy="6" rx="5" ry="3" />
            <ellipse cx="17" cy="4" rx="4" ry="2" />
            <ellipse cx="29" cy="4" rx="5" ry="2" />
            <ellipse cx="38" cy="8" rx="4" ry="3" />
            <ellipse cx="6" cy="15" rx="4" ry="3" />
            <ellipse cx="39" cy="16" rx="3" ry="3" />
            <ellipse cx="11" cy="22" rx="7" ry="2" />
            <ellipse cx="34" cy="23" rx="6" ry="2" />
          </g>
          <path d="M23 25q4-8 0-12M23 14 12 7M24 13l8-8M24 16l12-3M22 16l-9 1M31 14l4 5" stroke="#4e4740" strokeWidth="2" fill="none" />
        </svg>
      </SearchBox>
      {apps.map(app => (
        <AppButton key={app.name} aria-label={app.name} $active={app.active} $running={app.running}>
          {app.icon}
          {app.badge && <AppBadge>{app.badge}</AppBadge>}
        </AppButton>
      ))}
    </Apps>
    <Tray>
      <TrayButton $width={34} aria-label="Скрытые значки">
        <Icon size={14} weight={2.500}><path d="m3 16 9-9 9 9" /></Icon>
      </TrayButton>
      <TrayButton $width={30} $after={4} $raised aria-label="Микрофон">
        <Icon size={18} weight={1.800} stroke="#3a66b0"><rect x="8.500" y="2" width="7" height="13" rx="3.500" /><path d="M4 12q0 7 8 7t8-7M12 19v4" /></Icon>
      </TrayButton>
      <TrayButton $width={40} $after={8} $raised>РУС</TrayButton>
      <TrayButton $width={24} aria-label="Сеть">
        <Icon size={18} weight={1.700}><path d="M16 3H2v15h15M8 22h8M10 18v4M18 2h5v7h-5ZM20 9v13" /></Icon>
      </TrayButton>
      <TrayButton $width={24} aria-label="Громкость">
        <Icon size={18} weight={1.600}><path d="M1 9v6h4l5 5V4L5 9ZM13 9q2 3 0 6M16 6q4 6 0 12M19 3q7 9 0 18" /></Icon>
      </TrayButton>
      <DateTime>
        18:02
        <br />
        29.10.2025
      </DateTime>
    </Tray>
  </Taskbar>
);

const App = () => (
  <>
    <GlobalStyle />
    <Window>
      <BrowserChrome />
      <Middle>
        <SidePanel aria-label="Боковая панель">
          {sideGroups.map((group, index) => (
            <SideGroup key={index}>
              {group.map(item => (
                <SideButton key={item.name} aria-label={item.name} $dim={item.dim}>
                  {item.home ? <SideHome>{item.icon}</SideHome> : item.icon}
                </SideButton>
              ))}
            </SideGroup>
          ))}
        </SidePanel>
        <Page>
          <StudioMenu />
          <Main>
            <TopActions>
              <AddButton>
                <Icon size={24}><path d="M4 12h16M12 4v16" /></Icon>
                Добавить
              </AddButton>
              <BellButton aria-label="Уведомления">
                <Icon size={24} weight={1.800}>
                  <path d="M13 2.500C8 2 5.500 5 5.500 9v4L3 18h18l-2.500-5v-3M10 21.500q2 1 4 0" />
                  <circle cx="18.500" cy="4" r="3" fill="#d5133f" stroke="none" />
                </Icon>
              </BellButton>
              <Avatar aria-label="Профиль" />
            </TopActions>
            <PageTitle>Трансляция</PageTitle>
            <TabsPanel>
              <SectionTab>Настройки</SectionTab>
              <SectionTab $active>Управление</SectionTab>
            </TabsPanel>
            <StreamCard />
            <ChatPanel>
              <ChatHead>
                <ChatTab $active>Сообщения</ChatTab>
                <ToggleLabel>
                  Чат
                  <Toggle type="checkbox" defaultChecked />
                </ToggleLabel>
              </ChatHead>
            </ChatPanel>
          </Main>
          <HelpButton aria-label="Помощь">
            <Icon size={24} weight={1.500}>
              <path d="M11 3h12v10h-2v3l-3-3h-7ZM11 9H2v10h8M17 6v4M8 19h5v3l3-3v-3" />
            </Icon>
          </HelpButton>
        </Page>
        <ScrollTrack>
          <Icon size={10} weight={4}><path d="m4 16 8-9 8 9" /></Icon>
          <ScrollThumb />
          <Icon size={10} weight={3} stroke="#66667a"><path d="m4 8 8 9 8-9" /></Icon>
        </ScrollTrack>
      </Middle>
      <Desktop />
      <FrameGlow width="120" height="120" viewBox="0 0 120 120" fill="none" aria-hidden="true">
        <path d="M120 1H14L1 14v58" stroke="#1f8f38" />
        <path d="M68 0h36l-5 6H73Z" fill="#12a52c" />
        <path d="M0 72l5 5v26l-5 5Z" fill="#12a52c" />
      </FrameGlow>
    </Window>
  </>
);

export default App;
